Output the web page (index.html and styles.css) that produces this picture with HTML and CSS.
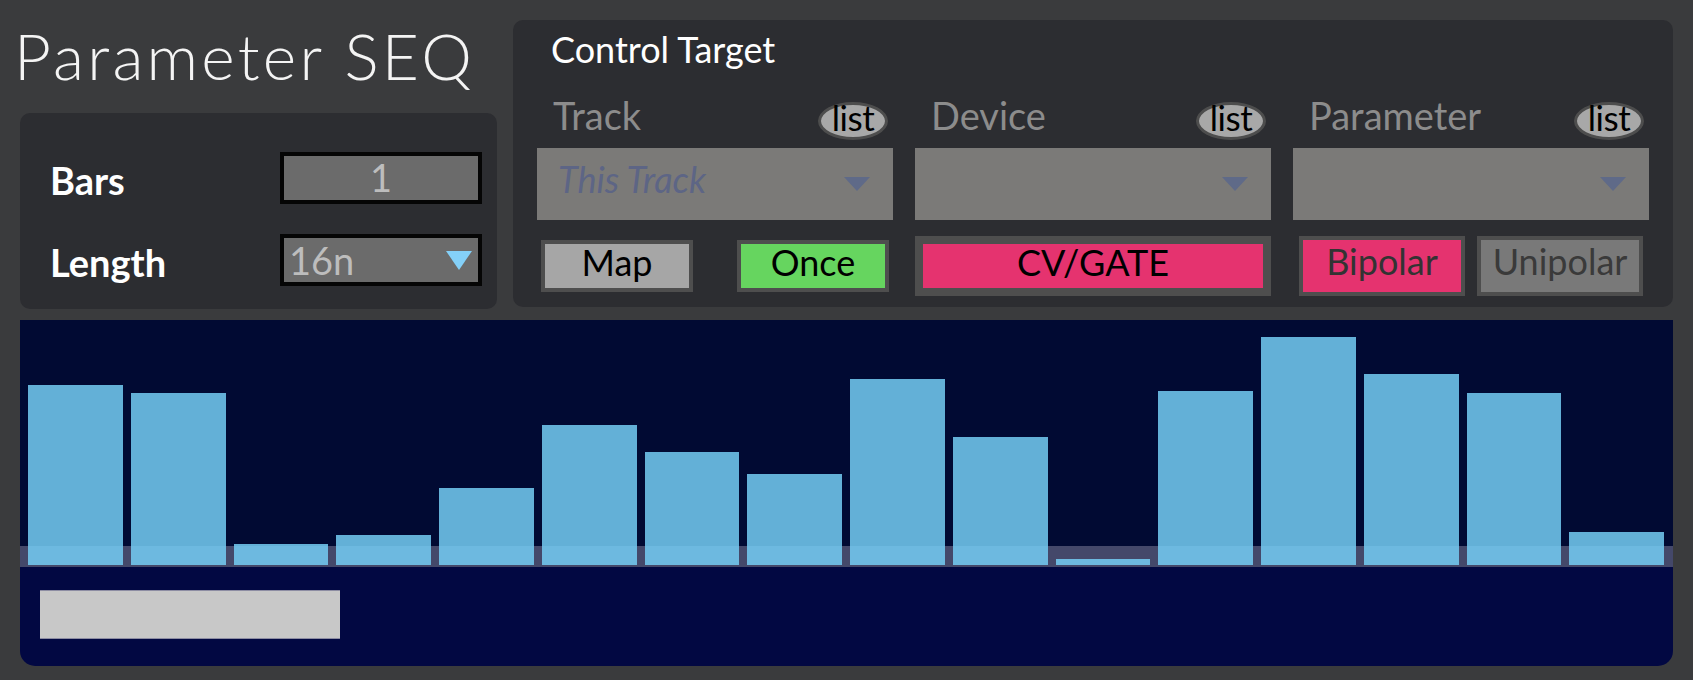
FILE: index.html
```html
<!DOCTYPE html>
<html lang="en">
<head>
  <meta charset="UTF-8" />
  <meta name="viewport" content="width=device-width, initial-scale=1.0"/>
  <title>Parameter SEQ</title>
  <link rel="stylesheet" href="styles.css">
</head>
<body>
  <div class="device">
    <div class="top">
      <div class="left-col">
        <h1 class="title">Parameter SEQ</h1>
        <div class="panel settings">
          <div class="field">
            <span class="field-label">Bars</span>
            <div class="num-box">1</div>
          </div>
          <div class="field">
            <span class="field-label">Length</span>
            <div class="num-box menu"><span>16n</span><span class="menu-arrow"></span></div>
          </div>
        </div>
      </div>

      <div class="panel target">
        <div class="target-title">Control Target</div>
        <div class="target-grid">
          <div class="target-col">
            <div class="col-head"><span class="col-label">Track</span><span class="list-pill">list</span></div>
            <div class="dropdown"><span class="dropdown-text">This Track</span><span class="dropdown-arrow"></span></div>
            <div class="btn-row pair">
              <button class="toggle map">Map</button>
              <button class="toggle once">Once</button>
            </div>
          </div>
          <div class="target-col">
            <div class="col-head"><span class="col-label">Device</span><span class="list-pill">list</span></div>
            <div class="dropdown"><span class="dropdown-text"></span><span class="dropdown-arrow"></span></div>
            <div class="btn-row">
              <button class="toggle cvgate">CV/GATE</button>
            </div>
          </div>
          <div class="target-col">
            <div class="col-head"><span class="col-label">Parameter</span><span class="list-pill">list</span></div>
            <div class="dropdown"><span class="dropdown-text"></span><span class="dropdown-arrow"></span></div>
            <div class="btn-row polar">
              <button class="toggle bipolar">Bipolar</button>
              <button class="toggle unipolar">Unipolar</button>
            </div>
          </div>
        </div>
      </div>
    </div>

    <div class="seq">
      <div class="bars">
        <div class="bar" style="height:180px"></div>
        <div class="bar" style="height:172px"></div>
        <div class="bar" style="height:21px"></div>
        <div class="bar" style="height:30px"></div>
        <div class="bar" style="height:77px"></div>
        <div class="bar" style="height:140px"></div>
        <div class="bar" style="height:113px"></div>
        <div class="bar" style="height:91px"></div>
        <div class="bar" style="height:186px"></div>
        <div class="bar" style="height:128px"></div>
        <div class="bar" style="height:6px"></div>
        <div class="bar" style="height:174px"></div>
        <div class="bar" style="height:228px"></div>
        <div class="bar" style="height:191px"></div>
        <div class="bar" style="height:172px"></div>
        <div class="bar" style="height:33px"></div>
      </div>
      <div class="seq-bottom">
        <div class="slider"></div>
      </div>
    </div>
  </div>
</body>
</html>
```

FILE: styles.css
```css
:root {
  --bg: #3a3b3d;
  --panel: #2c2d31;
  --frame: #4e4e4e;
  --pink: #e5336f;
  --menu: #7b7a78;
  --arrow: #5f6a88;
}

body {
  margin: 0;
  padding: 0;
  background: var(--bg);
  font-family: 'Lato', 'Open Sans', sans-serif;
  color: #fff;
}

.device {
  padding: 20px 20px 0 20px;
}

.top {
  display: flex;
  align-items: flex-start;
  gap: 16px;
}

.left-col {
  width: 477px;
}

.title {
  margin: 4px 0 25px -6px;
  font-size: 64px;
  line-height: 64px;
  font-weight: 300;
  letter-spacing: 3.2px;
  color: #f4f4f4;
}

.panel {
  background: var(--panel);
  border-radius: 10px;
}

/* bars / length box */
.settings {
  height: 196px;
  box-sizing: border-box;
  padding: 39px 15px 0 30px;
  display: flex;
  flex-direction: column;
  gap: 30px;
}

.field {
  display: flex;
  justify-content: space-between;
  align-items: center;
  height: 52px;
}

.field-label {
  font-size: 38px;
  line-height: 38px;
  font-weight: 700;
  padding-top: 3px;
}

.num-box {
  width: 202px;
  height: 52px;
  box-sizing: border-box;
  border: 4px solid #050505;
  background: #6b6b6b;
  color: #bdbdbd;
  font-size: 38px;
  line-height: 42px;
  text-align: center;
}

.num-box.menu {
  display: flex;
  justify-content: space-between;
  align-items: center;
  padding: 0 6px 0 5px;
}

.menu-arrow {
  width: 0;
  height: 0;
  border-left: 13.5px solid transparent;
  border-right: 13.5px solid transparent;
  border-top: 19px solid #84d0f8;
}

/* control target */
.target {
  width: 1160px;
  height: 287px;
  box-sizing: border-box;
  padding: 11px 24px 0 24px;
}

.target-title {
  margin-left: 14px;
  font-size: 36px;
  line-height: 36px;
}

.target-grid {
  margin-top: 29px;
  display: grid;
  grid-template-columns: repeat(3, 1fr);
  gap: 22px;
}

.col-head {
  height: 52px;
  display: flex;
  justify-content: space-between;
  align-items: flex-start;
}

.col-label {
  padding-left: 16px;
  font-size: 38px;
  line-height: 38px;
  color: #8c8c8c;
}

.list-pill {
  margin: 6px 5px 0 0;
  width: 70px;
  height: 38px;
  box-sizing: border-box;
  border: 3px solid #4d4d4d;
  border-radius: 50%;
  background: #a8a8a8;
  color: #000;
  font-size: 35px;
  line-height: 25px;
  text-align: center;
  letter-spacing: -0.5px;
}

.dropdown {
  height: 72px;
  background: var(--menu);
  display: flex;
  justify-content: space-between;
  align-items: center;
  padding: 0 23px 0 21px;
}

.dropdown-text {
  margin-bottom: 10px;
  font-size: 36px;
  font-style: italic;
  color: #5d6585;
}

.dropdown-arrow {
  width: 0;
  height: 0;
  border-left: 13.5px solid transparent;
  border-right: 13.5px solid transparent;
  border-top: 14px solid var(--arrow);
}

.btn-row {
  margin-top: 16px;
  height: 60px;
  display: flex;
  justify-content: space-between;
  align-items: center;
}

.btn-row.pair {
  padding: 0 4px;
}

.btn-row.polar {
  padding: 0 6px;
}

.toggle {
  margin: 0;
  padding: 0 0 14px 0;
  box-sizing: border-box;
  border: 4px solid var(--frame);
  font-family: 'Lato', 'Open Sans', sans-serif;
  font-size: 36px;
  line-height: 36px;
  color: #000;
  cursor: pointer;
}

.map, .once {
  width: 152px;
  height: 52px;
}

.map {
  background: #a6a6a6;
}

.once {
  background: #66d55f;
}

.cvgate {
  width: 100%;
  height: 60px;
  border-width: 8px;
  background: var(--pink);
}

.bipolar, .unipolar {
  width: 166px;
  height: 60px;
  padding-bottom: 10px;
}

.bipolar {
  background: var(--pink);
  color: #333;
}

.unipolar {
  background: #797979;
  color: #3a3a3a;
}

/* step sequencer */
.seq {
  margin-top: 11px;
  height: 346px;
  border-radius: 0 0 15px 15px;
  background: linear-gradient(#010a33 0 226px, #44486a 226px 247px, #020842 247px);
}

.bars {
  height: 245px;
  box-sizing: border-box;
  padding: 0 9px 0 8px;
  display: flex;
  align-items: flex-end;
  gap: 8px;
}

.bar {
  flex: 1;
  background: rgba(116, 206, 245, 0.85);
}

.seq-bottom {
  margin-top: 2px;
  padding: 23px 0 0 20px;
}

.slider {
  width: 300px;
  height: 47px;
  background: #c8c8c8;
  border-top: 1px solid #8d8da3;
  border-bottom: 1px solid #8d8da3;
}
```
